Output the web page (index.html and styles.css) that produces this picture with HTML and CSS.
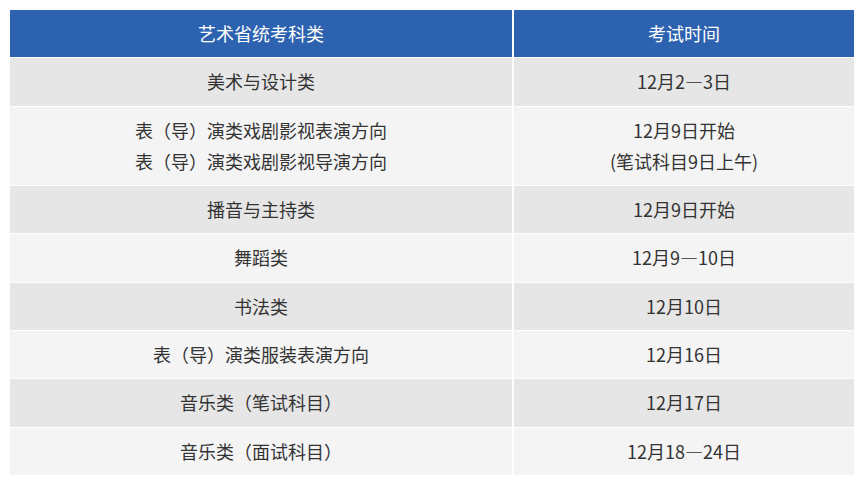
FILE: index.html
```html
<!DOCTYPE html>
<html lang="zh-CN">
<head>
<meta charset="utf-8">
<title>艺术省统考科类考试时间</title>
<link rel="stylesheet" href="styles.css">
</head>
<body>
<div class="wrap">
<table class="exam">
  <colgroup><col class="c1"><col class="c2"></colgroup>
  <thead>
    <tr><th>艺术省统考科类</th><th>考试时间</th></tr>
  </thead>
  <tbody>
    <tr class="dark"><td>美术与设计类</td><td>12月2—3日</td></tr>
    <tr class="light"><td>表（导）演类戏剧影视表演方向<br>表（导）演类戏剧影视导演方向</td><td>12月9日开始<br>(笔试科目9日上午)</td></tr>
    <tr class="dark"><td>播音与主持类</td><td>12月9日开始</td></tr>
    <tr class="light"><td>舞蹈类</td><td>12月9—10日</td></tr>
    <tr class="dark"><td>书法类</td><td>12月10日</td></tr>
    <tr class="light"><td>表（导）演类服装表演方向</td><td>12月16日</td></tr>
    <tr class="dark"><td>音乐类（笔试科目）</td><td>12月17日</td></tr>
    <tr class="light"><td>音乐类（面试科目）</td><td>12月18—24日</td></tr>
  </tbody>
</table>
</div>
</body>
</html>
```
FILE: styles.css
```css
html, body {
  margin: 0;
  padding: 0;
  background: #ffffff;
}
.wrap {
  padding: 9px 8px;
}
.exam {
  width: 848px;
  border-collapse: separate;
  border-spacing: 2px 1px;
  font-family: "Noto Sans CJK SC", "Noto Sans", sans-serif;
  font-size: 18px;
  color: #333333;
  table-layout: fixed;
}
.exam .c1 { width: 502px; }
.exam .c2 { width: 340px; }
.exam th,
.exam td {
  text-align: center;
  vertical-align: middle;
  padding: 8px 0;
  line-height: 31.3px;
}
.exam th {
  background: #2c62b0;
  color: #ffffff;
  font-weight: normal;
}
.exam tr.dark td { background: #e6e6e6; }
.exam tr.light td { background: #f4f4f4; }
```
